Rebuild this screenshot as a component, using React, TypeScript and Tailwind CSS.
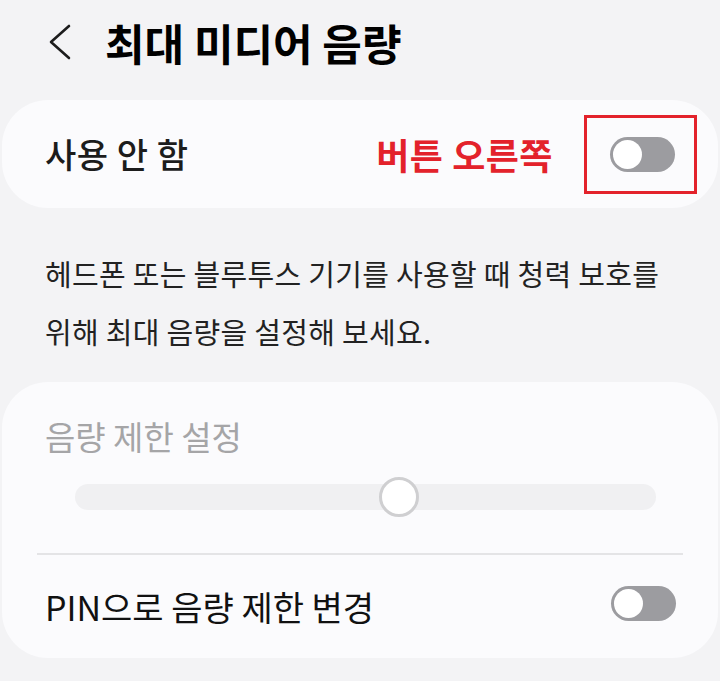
import React from "react"

const font = { fontFamily: '"Noto Sans CJK KR", "Noto Sans", sans-serif' }

function Toggle() {
  return (
    <div className="flex h-[35px] w-[65px] items-center rounded-full bg-[#9c9ca0] p-[3px]">
      <div className="h-[29px] w-[29px] rounded-full bg-white" />
    </div>
  )
}

export default function App() {
  return (
    <div className="h-[681px] w-[720px] overflow-hidden bg-[#f3f3f5] px-[2px] text-[#1c1c1c]" style={font}>
      {/* Header */}
      <div className="flex h-[84px] items-center">
        <svg className="ml-[46px] h-[36px] w-[24px]" viewBox="0 0 24 36" fill="none">
          <path d="M21 2 L3 18 L21 34" stroke="#1c1c1c" strokeWidth="2.6" strokeLinecap="round" strokeLinejoin="round" />
        </svg>
        <h1 className="ml-[33px] text-[43px] font-bold leading-none text-black">최대 미디어 음량</h1>
      </div>

      {/* Enable card */}
      <div className="mt-[16px] flex h-[108px] items-center rounded-[46px] bg-[#fbfbfd] pl-[43px] pr-[21px]">
        <span className="text-[34px] font-medium leading-none tracking-[0.5px]">사용 안 함</span>
        <span className="ml-auto text-[36px] font-bold leading-none tracking-[0.5px] text-[#e3222b]">버튼 오른쪽</span>
        <div className="ml-[31px] flex h-[79px] w-[113px] items-center border-[3px] border-[#e3222b] pl-[23px]">
          <Toggle />
        </div>
      </div>

      {/* Description */}
      <p className="mt-[36px] pl-[43px] text-[29px] leading-[58px] tracking-[0.3px] text-[#222]">
        헤드폰 또는 블루투스 기기를 사용할 때 청력 보호를
        <br />
        위해 최대 음량을 설정해 보세요.
      </p>

      {/* Limit card */}
      <div className="mt-[22px] flex h-[276px] flex-col rounded-[46px] bg-[#fbfbfd]">
        <div className="pl-[43px] pt-[38px] text-[33px] leading-[32px] text-[#a5a5a7]">음량 제한 설정</div>
        <div className="relative ml-[73px] mr-[62px] mt-[32px] h-[26px] rounded-full bg-[#f0f0f2]">
          <div className="absolute left-[304px] top-[-7px] h-[40px] w-[40px] rounded-full border-[3px] border-[#cfcfd1] bg-white" />
        </div>
        <div className="mx-[35px] mt-[43px] h-[2px] bg-[#e4e4e6]" />
        <div className="flex flex-1 items-center pl-[43px] pr-[42px]">
          <span className="text-[34px] leading-none text-[#111]">PIN으로 음량 제한 변경</span>
          <div className="ml-auto -mt-[6px]">
            <Toggle />
          </div>
        </div>
      </div>
    </div>
  )
}
